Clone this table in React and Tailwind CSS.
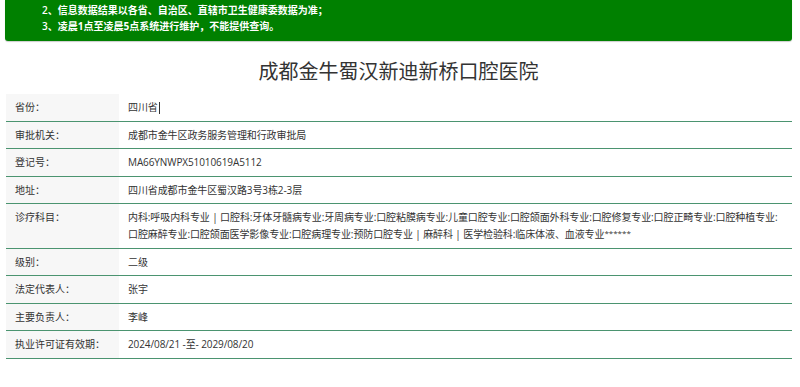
const rows = [
  { label: "省份：", value: "四川省", caret: true },
  { label: "审批机关：", value: "成都市金牛区政务服务管理和行政审批局" },
  { label: "登记号：", value: "MA66YNWPX51010619A5112" },
  { label: "地址：", value: "四川省成都市金牛区蜀汉路3号3栋2-3层" },
  {
    label: "诊疗科目：",
    value:
      "内科:呼吸内科专业 | 口腔科:牙体牙髓病专业:牙周病专业:口腔粘膜病专业:儿童口腔专业:口腔颌面外科专业:口腔修复专业:口腔正畸专业:口腔种植专业:口腔麻醉专业:口腔颌面医学影像专业:口腔病理专业:预防口腔专业 | 麻醉科 | 医学检验科:临床体液、血液专业",
    stars: true,
  },
  { label: "级别：", value: "二级" },
  { label: "法定代表人：", value: "张宇" },
  { label: "主要负责人：", value: "李峰" },
  { label: "执业许可证有效期：", value: "2024/08/21 -至- 2029/08/20" },
];

export default function App() {
  return (
    <div
      className="min-h-screen bg-white pl-[5px] pr-[8px] text-[#333]"
      style={{ fontFamily: '"Open Sans", "Noto Sans CJK SC", sans-serif' }}
    >
      <div className="bg-[#008000] rounded-b-[3px] shadow-[0_1px_1px_rgba(0,0,0,0.2)] pl-[37px] pt-[2px] pb-[7px] text-white text-[10px] leading-[16px] font-semibold">
        <p>2、信息数据结果以各省、自治区、直辖市卫生健康委数据为准；</p>
        <p>
          3、<span className="font-bold">凌晨1点至凌晨5点</span>系统进行维护，不能提供查询。
        </p>
      </div>

      <h1 className="mt-[17px] mb-[8px] text-center text-[20px] leading-[28px] text-[#333]">
        成都金牛蜀汉新迪新桥口腔医院
      </h1>

      <div className="ml-px text-[10px]">
        {rows.map((r) => (
          <div key={r.label} className="flex border-b border-[#4b9470]">
            <div className="w-[113px] shrink-0 bg-[#f7f7f7] pl-[9px] py-[5px] leading-[16.6px]">
              {r.label}
            </div>
            <div className="flex-1 pl-[9px] pr-[6px] py-[5px] leading-[16.6px] tracking-[-0.1px]">
              {r.value}
              {r.stars && (
                <span className="text-[8px] leading-none tracking-normal align-[2px]">******</span>
              )}
              {r.caret && (
                <span className="inline-block w-px h-[12px] bg-[#333] align-middle ml-px" />
              )}
            </div>
          </div>
        ))}
      </div>
    </div>
  );
}
